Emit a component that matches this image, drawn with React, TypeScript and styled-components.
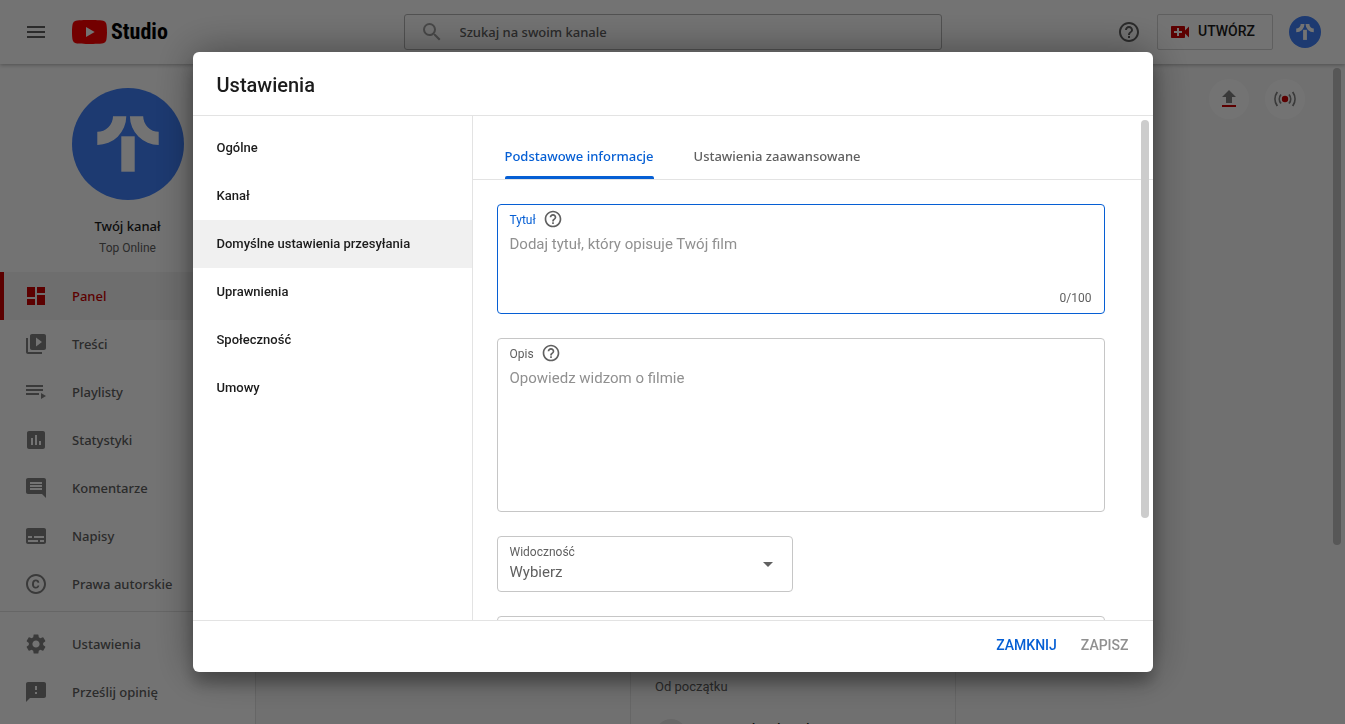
import React from "react";
import styled, { createGlobalStyle, css } from "styled-components";
import {
  MdArrowDropDown,
  MdAssessment,
  MdComment,
  MdCopyright,
  MdDashboard,
  MdFeedback,
  MdHelpOutline,
  MdMenu,
  MdSearch,
  MdSettings,
  MdSubtitles,
  MdVideoCall,
  MdVideoLibrary,
} from "react-icons/md";

const sans = `Roboto, "Liberation Sans", sans-serif`;
const brandSans = `"Noto Sans", Roboto, sans-serif`;

const color = {
  text: "#1c1c1c",
  muted: "#606060",
  faint: "#909090",
  line: "#e3e3e3",
  field: "#c6c6c6",
  red: "#cc0000",
  blue: "#065fd4",
  page: "#f9f9f9",
};

const GlobalStyle = createGlobalStyle`
  *, *::before, *::after { box-sizing: border-box; }
  body { margin: 0; background: ${color.page}; color: ${color.text}; font-family: ${sans}; }
  button, input, textarea, select { font: inherit; color: inherit; margin: 0; }
  h1, h2, p, ul { margin: 0; padding: 0; }
  ul { list-style: none; }
  svg { display: block; flex: none; }
`;

const Page = styled.div`
  height: 100vh;
  display: flex;
  flex-direction: column;
  overflow: hidden;
`;

const TopBar = styled.header`
  flex: none;
  height: 64px;
  padding: 0 24px;
  display: flex;
  align-items: center;
  justify-content: space-between;
  background: #fff;
  box-shadow: 0 1px 4px rgba(0, 0, 0, 0.3);
  z-index: 1;
`;

const BarSide = styled.div<{ $end?: boolean }>`
  flex: 1;
  display: flex;
  align-items: center;
  justify-content: ${(p) => (p.$end ? "flex-end" : "flex-start")};
  gap: ${(p) => (p.$end ? 16 : 24)}px;
`;

const IconButton = styled.button`
  display: grid;
  place-items: center;
  padding: 0;
  border: 0;
  background: none;
  color: ${color.muted};
`;

const LogoLink = styled.a`
  display: flex;
  align-items: center;
  gap: 4px;
  color: #000;
  text-decoration: none;
  font: 700 22px/24px "Liberation Sans Narrow", "Roboto Condensed", sans-serif;
`;

const SearchBox = styled.label`
  width: 40vw;
  height: 36px;
  display: flex;
  align-items: center;
  gap: 16px;
  padding: 0 15px;
  border: 1px solid #b4b4b4;
  border-radius: 3px;
  color: #a0a0a0;
`;

const SearchInput = styled.input`
  flex: 1;
  border: 0;
  padding: 0;
  background: none;
  outline: 0;
  font: 500 13px/20px ${brandSans};
  &::placeholder { color: ${color.muted}; opacity: 1; }
`;

const CreateButton = styled.button`
  height: 36px;
  display: flex;
  align-items: center;
  gap: 6px;
  padding: 0 17px 2px 10px;
  border: 1px solid #d3d3d3;
  border-radius: 2px;
  background: none;
  font-size: 14px;
  font-weight: 500;
  color: ${color.text};
  svg { color: ${color.red}; margin-top: 2px; }
`;

const Body = styled.div`
  flex: 1;
  min-height: 0;
  display: flex;
`;

const Sidebar = styled.aside`
  flex: none;
  width: 256px;
  display: flex;
  flex-direction: column;
  background: #fff;
  border-right: 1px solid ${color.line};
`;

const Profile = styled.div`
  padding: 24px 0 16px;
  display: flex;
  flex-direction: column;
  align-items: center;
`;

const ProfileName = styled.p`
  margin-top: 16px;
  font: 500 13px/20px ${brandSans};
`;

const ProfileSub = styled.p`
  margin-top: 4px;
  font-size: 12px;
  line-height: 16px;
  color: ${color.muted};
`;

const SideList = styled.ul<{ $bottom?: boolean }>`
  ${(p) =>
    p.$bottom
      ? css`
          flex: none;
          padding: 8px 0;
          border-top: 1px solid ${color.line};
        `
      : css`
          flex: 1;
          min-height: 0;
          overflow: hidden;
        `}
`;

const SideLink = styled.a<{ $active?: boolean }>`
  height: 48px;
  display: flex;
  align-items: center;
  gap: 24px;
  padding-left: 20px;
  border-left: 4px solid ${(p) => (p.$active ? color.red : "transparent")};
  background: ${(p) => (p.$active ? "#f4f4f4" : "none")};
  color: ${(p) => (p.$active ? color.red : color.muted)};
  text-decoration: none;
  font: 500 13px/20px ${brandSans};
  svg { color: ${(p) => (p.$active ? color.red : "#808080")}; }
`;

const Main = styled.main`
  position: relative;
  flex: 1;
  min-width: 0;
  padding: 15px 40px 0 24px;
  overflow: hidden;
`;

const QuickActions = styled.div`
  display: flex;
  justify-content: flex-end;
  gap: 16px;
`;

const RoundButton = styled.button`
  width: 40px;
  height: 40px;
  display: grid;
  place-items: center;
  padding: 0;
  border: 0;
  border-radius: 50%;
  background: #fff;
  color: #808080;
`;

const Cards = styled.div`
  display: grid;
  grid-template-columns: repeat(2, 326px);
  gap: 24px;
  margin-top: 24px;
`;

const Card = styled.section`
  grid-column: 2;
  height: 720px;
  padding: 533px 24px 0;
  border: 1px solid ${color.line};
  background: ${color.page};
`;

const CardNote = styled.p`
  font-size: 13px;
  line-height: 20px;
  color: ${color.muted};
`;

const Subscriber = styled.div`
  display: flex;
  gap: 24px;
  margin-top: 22px;
  font-size: 13px;
  font-weight: 500;
  line-height: 20px;
`;

const SubscriberPhoto = styled.span`
  width: 32px;
  height: 32px;
  border-radius: 50%;
  background: #e4e4e4;
`;

const ScrollThumb = styled.span<{ $length: string; $tone: string }>`
  position: absolute;
  top: 4px;
  right: 4px;
  width: 8px;
  height: ${(p) => p.$length};
  border-radius: 4px;
  background: ${(p) => p.$tone};
`;

const Backdrop = styled.div`
  position: fixed;
  inset: 0;
  z-index: 2;
  display: grid;
  place-items: center;
  background: rgba(0, 0, 0, 0.55);
`;

const Dialog = styled.div`
  width: min(960px, 100vw - 48px);
  height: min(620px, 100vh - 48px);
  display: flex;
  flex-direction: column;
  border-radius: 6px;
  background: #fff;
  box-shadow: 0 12px 15px rgba(0, 0, 0, 0.24), 0 0 40px rgba(0, 0, 0, 0.4);
  overflow: hidden;
`;

const DialogHead = styled.header`
  flex: none;
  height: 64px;
  padding: 2px 24px 0;
  display: flex;
  align-items: center;
  border-bottom: 1px solid ${color.line};
`;

const DialogTitle = styled.h1`
  font-size: 20px;
  font-weight: 500;
  line-height: 28px;
`;

const DialogBody = styled.div`
  flex: 1;
  min-height: 0;
  display: flex;
`;

const DialogNav = styled.nav`
  flex: none;
  width: 280px;
  padding-top: 8px;
  border-right: 1px solid ${color.line};
`;

const NavButton = styled.button<{ $active?: boolean }>`
  width: 100%;
  height: 48px;
  display: block;
  padding: 0 24px 2px;
  border: 0;
  background: ${(p) => (p.$active ? "#f0f0f0" : "none")};
  text-align: left;
  font-size: 13px;
  font-weight: 500;
`;

const Panel = styled.div`
  position: relative;
  flex: 1;
  min-width: 0;
  overflow: hidden;
`;

const Tabs = styled.div`
  height: 64px;
  display: flex;
  gap: 40px;
  padding: 0 32px;
  border-bottom: 1px solid ${color.line};
`;

const Tab = styled.button<{ $active?: boolean }>`
  position: relative;
  padding: 16px 0 0;
  border: 0;
  background: none;
  color: ${(p) => (p.$active ? color.blue : color.muted)};
  font: 500 13px/20px ${brandSans};
  &::after {
    content: "";
    position: absolute;
    inset: auto 0 0;
    height: 3px;
    border-radius: 2px 2px 0 0;
    background: ${(p) => (p.$active ? color.blue : "transparent")};
  }
`;

const Form = styled.form`
  display: flex;
  flex-direction: column;
  gap: 24px;
  padding: 24px 48px 0 24px;
`;

const Field = styled.div<{ $active?: boolean; $height: number }>`
  height: ${(p) => p.$height}px;
  display: flex;
  flex-direction: column;
  padding: 4px 12px 5px;
  border: 1px solid ${(p) => (p.$active ? color.blue : color.field)};
  border-radius: 4px;
`;

const LabelRow = styled.div<{ $active?: boolean }>`
  display: flex;
  align-items: center;
  gap: 7px;
  height: 20px;
  color: ${(p) => (p.$active ? color.blue : color.muted)};
  font-size: 12px;
  line-height: 20px;
  label { padding-top: 2px; }
`;

const TextArea = styled.textarea`
  flex: 1;
  min-height: 0;
  width: 100%;
  padding: 3px 0 0;
  border: 0;
  outline: 0;
  resize: none;
  background: none;
  font-size: 15px;
  line-height: 24px;
  &::placeholder { color: ${color.faint}; opacity: 1; }
`;

const Counter = styled.span`
  align-self: flex-end;
  color: ${color.muted};
  font-size: 12px;
  line-height: 20px;
`;

const SelectField = styled.div`
  position: relative;
  width: 296px;
  height: 56px;
  padding: 7px 12px 0;
  border: 1px solid ${color.field};
  border-radius: 4px;
  color: ${color.muted};
  svg { position: absolute; right: 12px; top: 15px; pointer-events: none; }
`;

const SelectLabel = styled.label`
  display: block;
  font-size: 12px;
  line-height: 16px;
`;

const Select = styled.select`
  display: block;
  width: 100%;
  height: 24px;
  padding: 0;
  border: 0;
  outline: 0;
  appearance: none;
  background: none;
  font-size: 15px;
  line-height: 24px;
`;

const DialogFoot = styled.footer`
  flex: none;
  height: 52px;
  display: flex;
  align-items: center;
  justify-content: flex-end;
  gap: 24px;
  padding: 0 24px 4px;
  border-top: 1px solid ${color.line};
`;

const TextButton = styled.button<{ $primary?: boolean }>`
  padding: 0;
  border: 0;
  background: none;
  color: ${(p) => (p.$primary ? color.blue : color.faint)};
  font-size: 14px;
  font-weight: 500;
  line-height: 20px;
`;

function ChannelAvatar({ size }: { size: number }) {
  return (
    <svg width={size} height={size} viewBox="0 0 112 112" aria-hidden="true">
      <circle cx="56" cy="56" r="56" fill="#4080fa" />
      <g fill="#fff">
        <path d="M41 28.3h13.3A28.9 28.9 0 0 1 25.3 57V43.7A15.7 15.5 0 0 0 41 28.3z" />
        <path d="M71.2 28.3H57.9A28.9 28.9 0 0 0 86.7 57V43.7A15.7 15.5 0 0 1 71.2 28.3z" />
        <path d="M49.3 48.3h13.4v35.4H49.3z" />
      </g>
    </svg>
  );
}

function PlayLogo() {
  return (
    <svg width="35" height="24" viewBox="0 0 35 24" aria-hidden="true">
      <path
        fill="#f00"
        d="M34.3 3.8A4.4 4.4 0 0 0 31.2.7C28.5 0 17.5 0 17.5 0S6.5 0 3.8.7A4.4 4.4 0 0 0 .7 3.8C0 6.5 0 12 0 12s0 5.5.7 8.2a4.4 4.4 0 0 0 3.1 3.1C6.5 24 17.5 24 17.5 24s11 0 13.700-.7a4.400 4.400 0 0 0 3.100-3.100C35 17.500 35 12 35 12s0-5.500-.7-8.200z"
      />
      <path fill="#fff" d="M14 17.100 22.700 12 14 6.900z" />
    </svg>
  );
}

function PlaylistIcon() {
  return (
    <svg width="24" height="24" viewBox="0 0 24 24" fill="currentColor" aria-hidden="true">
      <path d="M19 9H2v2h17V9zm0-4H2v2h17V5zM2 15h13v-2H2v2zm15-2v6l5-3-5-3z" />
    </svg>
  );
}

function UploadIcon() {
  return (
    <svg width="24" height="24" viewBox="0 0 24 24" aria-hidden="true">
      <path fill="currentColor" d="M9 16h6v-6h4l-7-7-7 7h4z" />
      <path fill={color.red} d="M5 18h14v2H5z" />
    </svg>
  );
}

function LiveIcon() {
  return (
    <svg width="24" height="24" viewBox="0 0 24 24" fill="none" stroke="currentColor" strokeWidth="1.8" aria-hidden="true">
      <circle cx="12" cy="12" r="3.2" fill={color.red} stroke="none" />
      <path d="M8 7.5a7 7 0 0 0 0 9M16 7.5a7 7 0 0 1 0 9" />
      <path d="M4.300 5a12 12 0 0 0 0 14M19.700 5a12 12 0 0 1 0 14" />
    </svg>
  );
}

const mainLinks = [
  { label: "Panel", icon: <MdDashboard size={24} />, active: true },
  { label: "Treści", icon: <MdVideoLibrary size={24} /> },
  { label: "Playlisty", icon: <PlaylistIcon /> },
  { label: "Statystyki", icon: <MdAssessment size={24} /> },
  { label: "Komentarze", icon: <MdComment size={24} /> },
  { label: "Napisy", icon: <MdSubtitles size={24} /> },
  { label: "Prawa autorskie", icon: <MdCopyright size={24} /> },
];

const bottomLinks = [
  { label: "Ustawienia", icon: <MdSettings size={24} /> },
  { label: "Prześlij opinię", icon: <MdFeedback size={24} /> },
];

const sections = ["Ogólne", "Kanał", "Domyślne ustawienia przesyłania", "Uprawnienia", "Społeczność", "Umowy"];

function SideLinks({ items, bottom }: { items: { label: string; icon: React.ReactNode; active?: boolean }[]; bottom?: boolean }) {
  return (
    <SideList $bottom={bottom}>
      {items.map((item) => (
        <li key={item.label}>
          <SideLink href="#" $active={item.active}>
            {item.icon}
            {item.label}
          </SideLink>
        </li>
      ))}
    </SideList>
  );
}

function SettingsDialog() {
  return (
    <Backdrop>
      <Dialog role="dialog" aria-modal="true" aria-labelledby="settings-title">
        <DialogHead>
          <DialogTitle id="settings-title">Ustawienia</DialogTitle>
        </DialogHead>
        <DialogBody>
          <DialogNav>
            {sections.map((name, i) => (
              <NavButton key={name} $active={i === 2}>
                {name}
              </NavButton>
            ))}
          </DialogNav>
          <Panel>
            <Tabs role="tablist">
              <Tab role="tab" aria-selected="true" $active>
                Podstawowe informacje
              </Tab>
              <Tab role="tab" aria-selected="false">
                Ustawienia zaawansowane
              </Tab>
            </Tabs>
            <Form>
              <Field $active $height={110}>
                <LabelRow $active>
                  <label htmlFor="video-title">Tytuł</label>
                  <IconButton type="button">
                    <MdHelpOutline size={20} />
                  </IconButton>
                </LabelRow>
                <TextArea id="video-title" placeholder="Dodaj tytuł, który opisuje Twój film" />
                <Counter>0/100</Counter>
              </Field>
              <Field $height={174}>
                <LabelRow>
                  <label htmlFor="video-description">Opis</label>
                  <IconButton type="button">
                    <MdHelpOutline size={20} />
                  </IconButton>
                </LabelRow>
                <TextArea id="video-description" placeholder="Opowiedz widzom o filmie" />
              </Field>
              <SelectField>
                <SelectLabel htmlFor="visibility">Widoczność</SelectLabel>
                <Select id="visibility">
                  <option>Wybierz</option>
                </Select>
                <MdArrowDropDown size={24} />
              </SelectField>
              <Field $height={110} />
            </Form>
            <ScrollThumb $length="79%" $tone="#cccccc" />
          </Panel>
        </DialogBody>
        <DialogFoot>
          <TextButton $primary>ZAMKNIJ</TextButton>
          <TextButton>ZAPISZ</TextButton>
        </DialogFoot>
      </Dialog>
    </Backdrop>
  );
}

export default function App() {
  return (
    <>
      <GlobalStyle />
      <Page>
        <TopBar>
          <BarSide>
            <IconButton>
              <MdMenu size={24} />
            </IconButton>
            <LogoLink href="#">
              <PlayLogo />
              Studio
            </LogoLink>
          </BarSide>
          <SearchBox>
            <MdSearch size={24} />
            <SearchInput placeholder="Szukaj na swoim kanale" />
          </SearchBox>
          <BarSide $end>
            <IconButton>
              <MdHelpOutline size={24} />
            </IconButton>
            <CreateButton>
              <MdVideoCall size={24} />
              UTWÓRZ
            </CreateButton>
            <ChannelAvatar size={32} />
          </BarSide>
        </TopBar>
        <Body>
          <Sidebar>
            <Profile>
              <ChannelAvatar size={112} />
              <ProfileName>Twój kanał</ProfileName>
              <ProfileSub>Top Online</ProfileSub>
            </Profile>
            <SideLinks items={mainLinks} />
            <SideLinks items={bottomLinks} bottom />
          </Sidebar>
          <Main>
            <QuickActions>
              <RoundButton>
                <UploadIcon />
              </RoundButton>
              <RoundButton>
                <LiveIcon />
              </RoundButton>
            </QuickActions>
            <Cards>
              <Card>
                <CardNote>Od początku</CardNote>
                <Subscriber>
                  <SubscriberPhoto />
                  Dominik Kubiatek
                </Subscriber>
              </Card>
            </Cards>
            <ScrollThumb $length="477px" $tone="#c1c1c1" />
          </Main>
        </Body>
      </Page>
      <SettingsDialog />
    </>
  );
}
